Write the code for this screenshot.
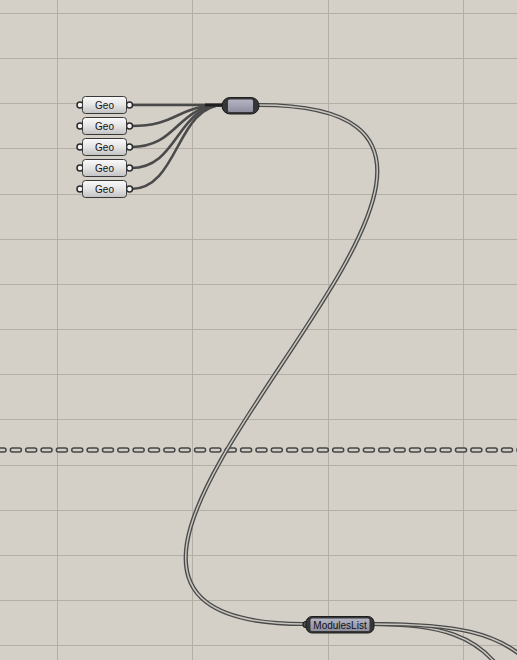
import React from "react";

const W = 517;
const H = 660;

const hLines = Array.from({ length: 15 }, (_, k) => Math.round(13 + 45.15 * k) + 0.5);
const vLines = [57.5, 192.5, 328.5, 463.5];
const dashes = Array.from({ length: 36 }, (_, k) => k * 15.35 - 5);
const geoRows = [105, 126, 147, 168, 189];

function wirePath(x1, y1, x2, y2, l) {
  return `M${x1},${y1} C${x1 + l},${y1} ${x2 - l},${y2} ${x2},${y2}`;
}

function ListWire({ d }) {
  return (
    <g fill="none" strokeLinecap="round">
      <path d={d} stroke="#4a4a4a" strokeWidth="4.2" />
      <path d={d} stroke="#c9c6bf" strokeWidth="1.5" />
    </g>
  );
}

function GeoNode({ cy }) {
  return (
    <g>
      <circle cx="80" cy={cy} r="3" fill="#f4f4f4" stroke="#2a2a2a" strokeWidth="1.5" />
      <circle cx="129.5" cy={cy} r="3" fill="#f4f4f4" stroke="#2a2a2a" strokeWidth="1.5" />
      <rect x="82.5" y={cy - 8.5} width="44" height="17" rx="3" fill="url(#geoFill)" stroke="#383838" strokeWidth="1" />
      <text x="104.5" y={cy + 3.5} textAnchor="middle" fontSize="10" fill="#111">
        Geo
      </text>
    </g>
  );
}

export default function App() {
  return (
    <div className="w-[517px] h-[660px] overflow-hidden bg-[#d4d0c8] font-['Liberation_Sans',Arial,sans-serif]">
      <svg width={W} height={H} viewBox={`0 0 ${W} ${H}`} className="block">
        <defs>
          <linearGradient id="geoFill" x1="0" y1="0" x2="0" y2="1">
            <stop offset="0" stopColor="#fafafa" />
            <stop offset="0.5" stopColor="#e4e4e4" />
            <stop offset="1" stopColor="#c2c2c2" />
          </linearGradient>
          <linearGradient id="lav" x1="0" y1="0" x2="0" y2="1">
            <stop offset="0" stopColor="#b3b3c2" />
            <stop offset="0.5" stopColor="#a2a2b3" />
            <stop offset="1" stopColor="#8e8e9e" />
          </linearGradient>
        </defs>

        {/* grid */}
        <g stroke="#b3afa7" strokeWidth="1">
          {hLines.map((y) => (
            <line key={`h${y}`} x1="0" y1={y} x2={W} y2={y} />
          ))}
          {vLines.map((x) => (
            <line key={`v${x}`} x1={x} y1="0" x2={x} y2={H} />
          ))}
        </g>

        {/* dashed group boundary */}
        <g>
          {dashes.map((x) => (
            <rect key={x} x={x} y="448" width="11" height="4" rx="2" fill="#d2cfc8" stroke="#454545" strokeWidth="1.5" />
          ))}
        </g>

        {/* geo wires */}
        <g fill="none" stroke="#4a4a4a" strokeWidth="2.6" strokeLinecap="round">
          {geoRows.map((cy) => (
            <path key={cy} d={wirePath(131, cy, 224, 105, 48)} />
          ))}
        </g>
        <path d="M205,105 L224,105" stroke="#1e1e1e" strokeWidth="3" />

        {/* main list wire */}
        <ListWire d={wirePath(259, 105, 304, 624, 391)} />
        <ListWire d="M373,624 C440,624 478,636 502,672" />
        <ListWire d="M373,624 C455,624 500,632 530,664" />

        {/* geo params */}
        {geoRows.map((cy) => (
          <GeoNode key={cy} cy={cy} />
        ))}

        {/* merge node */}
        <g>
          <rect x="222" y="97.5" width="37" height="16.5" rx="8" fill="#363636" stroke="#1e1e1e" strokeWidth="1" />
          <rect x="228" y="99.5" width="25" height="12.5" rx="1.5" fill="url(#lav)" />
        </g>

        {/* ModulesList node */}
        <g>
          <circle cx="306" cy="624.5" r="3" fill="#555" stroke="#222" strokeWidth="1.2" />
          <rect x="306" y="616.5" width="68" height="16.5" rx="6" fill="#363636" stroke="#1e1e1e" strokeWidth="1" />
          <rect x="310.5" y="618.5" width="59" height="12.5" rx="1.5" fill="url(#lav)" />
          <text x="340" y="628.5" textAnchor="middle" fontSize="10" fill="#111">
            ModulesList
          </text>
        </g>
      </svg>
    </div>
  );
}
